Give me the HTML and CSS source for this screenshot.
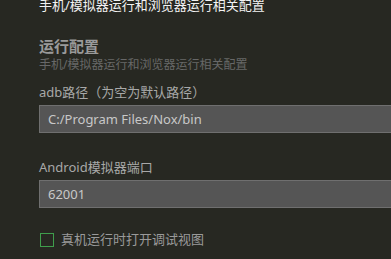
FILE: index.html
```html
<!DOCTYPE html>
<html lang="zh-CN">
  <head>
    <meta charset="UTF-8" />
    <meta name="viewport" content="width=device-width, initial-scale=1.0" />
    <title>运行配置</title>
    <link rel="stylesheet" href="styles.css">
  </head>
  <body>
    <div id="settings">
      <p class="prev-desc">手机/模拟器运行和浏览器运行相关配置</p>

      <!-- 运行配置 -->
      <div class="section">
        <h2 class="section-title">运行配置</h2>
        <p class="section-desc">手机/模拟器运行和浏览器运行相关配置</p>

        <div class="field">
          <label class="field-label">adb路径（为空为默认路径）</label>
          <input class="field-input" type="text" value="C:/Program Files/Nox/bin" />
        </div>

        <div class="field">
          <label class="field-label">Android模拟器端口</label>
          <input class="field-input" type="text" value="62001" />
        </div>

        <label class="check">
          <span class="check-box"></span>
          <span class="check-text">真机运行时打开调试视图</span>
        </label>
      </div>
    </div>
  </body>
</html>
```

FILE: styles.css
```css
html,
body {
  margin: 0;
  background-color: #272822;
  overflow: hidden;
}
body {
  font-family: "Noto Sans", "Noto Sans CJK SC", sans-serif;
}
#settings {
  padding-left: 39px;
}
.prev-desc {
  margin: -4px 0 0;
  font-size: 13px;
  line-height: 19px;
  color: #f2f2f2;
}
.section {
  margin-top: 21px;
}
.section-title {
  margin: 0;
  font-size: 15px;
  line-height: 20px;
  font-weight: bold;
  color: #9a9a9a;
}
.section-desc {
  margin: 0;
  font-size: 12px;
  line-height: 17px;
  color: #686868;
}
.field {
  margin-top: 10px;
  display: flex;
  flex-direction: column;
}
.field + .field {
  margin-top: 25px;
}
.field-label {
  font-size: 13px;
  line-height: 19px;
  color: #a8a8a8;
}
.field-input {
  margin-top: 3px;
  width: 380px;
  height: 28px;
  box-sizing: border-box;
  padding: 0 8px;
  font-family: inherit;
  font-size: 13px;
  color: #c8c8c8;
  background-color: #555555;
  border: 1px solid #6f6f6f;
  outline: none;
}
.check {
  margin-top: 22px;
  display: flex;
  align-items: center;
  gap: 7px;
}
.check-box {
  width: 14px;
  height: 14px;
  box-sizing: border-box;
  border: 1px solid #3f9e4c;
  margin-left: 1px;
}
.check-text {
  font-size: 13px;
  line-height: 19px;
  color: #9a9a9a;
}
```
